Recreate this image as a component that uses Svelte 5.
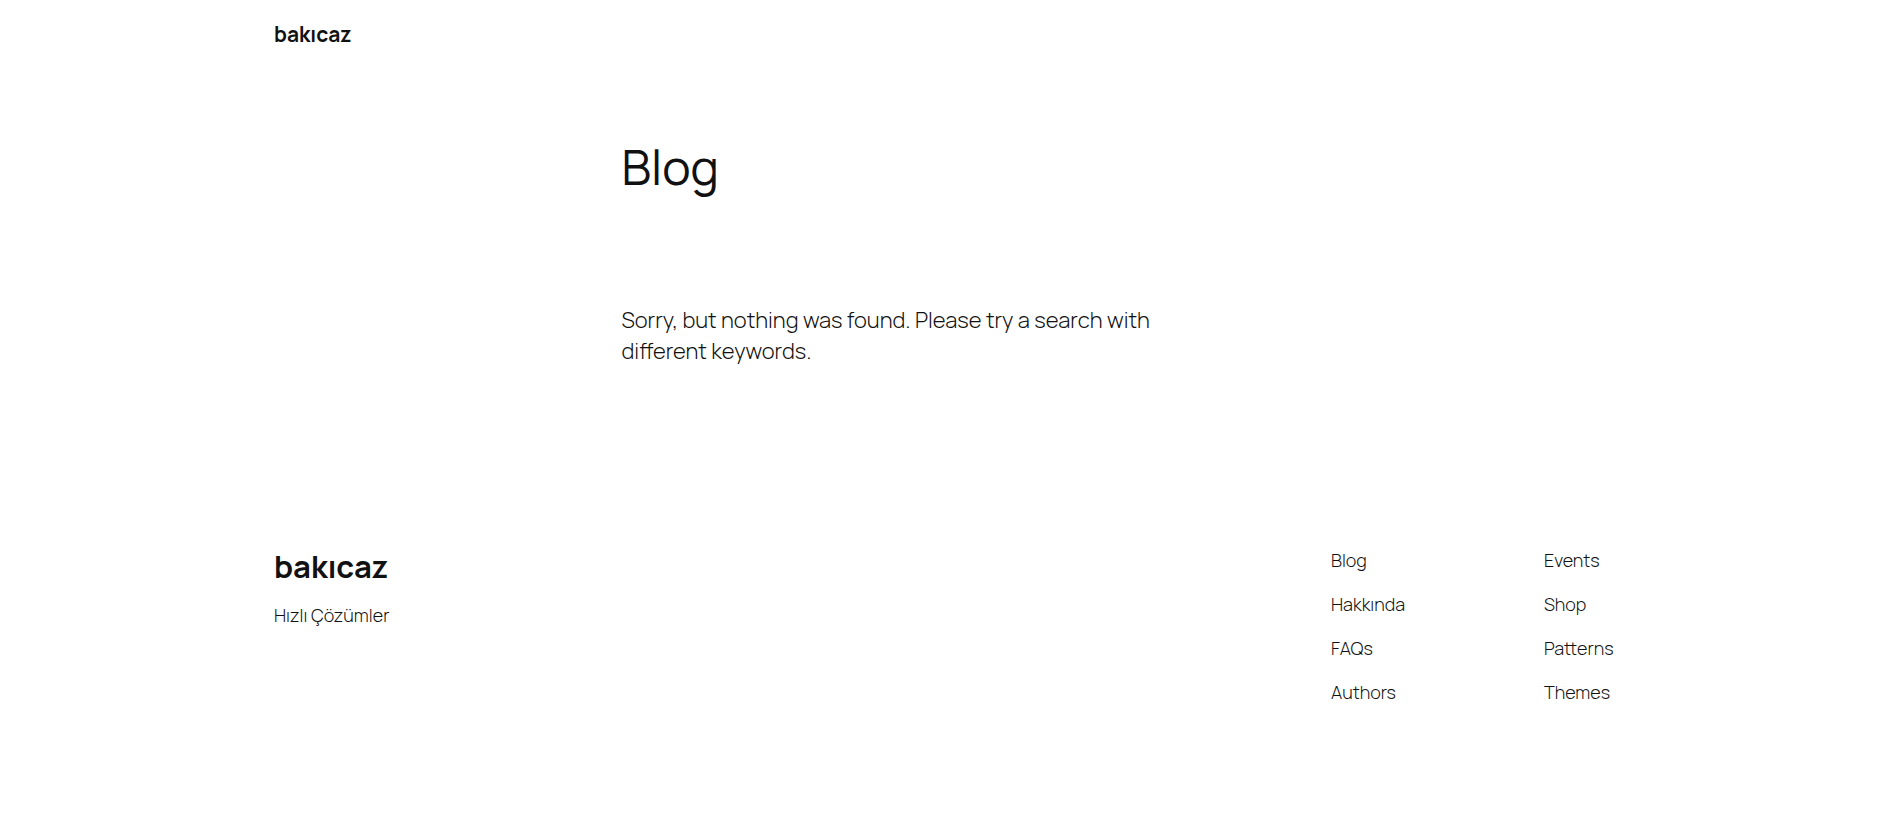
<script>
  let { siteTitle = 'bakıcaz', tagline = 'Hızlı Çözümler' } = $props();

  const menus = [
    { label: 'Blog', links: ['Blog', 'Hakkında', 'FAQs', 'Authors'] },
    { label: 'Shop', links: ['Events', 'Shop', 'Patterns', 'Themes'] }
  ];
</script>

<header class="site-header">
  <div class="wide">
    <p class="site-title"><a href="#home">{siteTitle}</a></p>
  </div>
</header>

<main>
  <div class="content">
    <h1>Blog</h1>
    <p class="no-results">
      Sorry, but nothing was found. Please try a search with different keywords.
    </p>
  </div>
</main>

<footer class="site-footer">
  <div class="wide footer-row">
    <div>
      <h2><a href="#home">{siteTitle}</a></h2>
      <p class="tagline">{tagline}</p>
    </div>
    <div class="menus">
      {#each menus as menu (menu.label)}
        <nav aria-label={menu.label}>
          <ul>
            {#each menu.links as link (link)}
              <li><a href="#{link.toLowerCase()}">{link}</a></li>
            {/each}
          </ul>
        </nav>
      {/each}
    </div>
  </div>
</footer>

<style>
  :global(body) {
    background: #fff;
    color: #111;
    font-family: Manrope, Inter, sans-serif;
    font-weight: 300;
  }

  h1,
  h2,
  p,
  ul {
    margin: 0;
    padding: 0;
  }

  a {
    color: inherit;
    text-decoration: none;
  }

  a:hover {
    text-decoration: underline;
  }

  .wide {
    max-width: 1340px;
    margin: 0 auto;
  }

  .content {
    max-width: 645px;
    margin: 0 auto;
  }

  .site-header {
    padding: 20px 48px;
  }

  .site-title {
    font-size: 21px;
    font-weight: 700;
    line-height: 28px;
  }

  main {
    padding: 71px 48px 0;
  }

  h1 {
    font-size: 48px;
    font-weight: 400;
    line-height: 56px;
  }

  .no-results {
    max-width: 560px;
    margin-top: 110px;
    font-size: 22px;
    line-height: 31px;
  }

  .site-footer {
    padding: 181px 48px 80px;
  }

  .footer-row {
    display: flex;
    justify-content: space-between;
  }

  h2 {
    font-size: 31px;
    font-weight: 700;
    line-height: 36px;
  }

  .tagline {
    margin-top: 19px;
    font-size: 18px;
    line-height: 25px;
  }

  .menus {
    display: grid;
    grid-template-columns: 213px 70px;
  }

  ul {
    display: flex;
    flex-direction: column;
    gap: 19px;
    list-style: none;
  }

  li {
    font-size: 18px;
    line-height: 25px;
  }
</style>
